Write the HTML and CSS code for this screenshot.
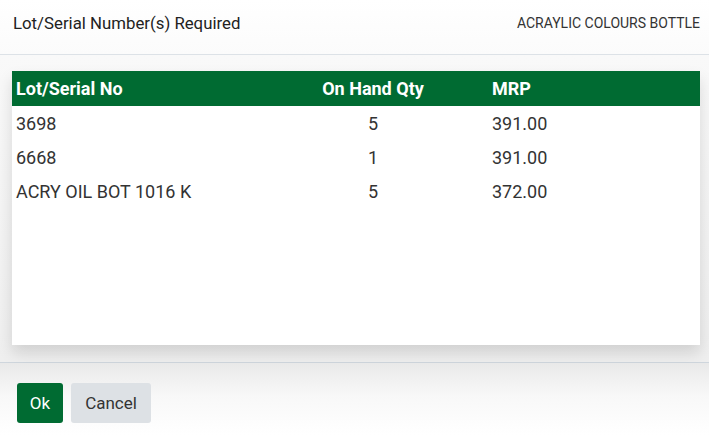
FILE: index.html
```html
<!DOCTYPE html>
<html>
<head>
<meta charset="utf-8">
<link rel="stylesheet" href="styles.css">
</head>
<body>
<div class="modal">
  <div class="modal-header">
    <div class="title">Lot/Serial Number(s) Required</div>
    <div class="subtitle">ACRAYLIC COLOURS BOTTLE</div>
  </div>
  <div class="modal-body">
    <div class="card">
      <table class="grid">
        <thead>
          <tr>
            <th class="c1">Lot/Serial No</th>
            <th class="c2">On Hand Qty</th>
            <th class="c3">MRP</th>
          </tr>
        </thead>
        <tbody>
          <tr><td class="c1">3698</td><td class="c2">5</td><td class="c3">391.00</td></tr>
          <tr><td class="c1">6668</td><td class="c2">1</td><td class="c3">391.00</td></tr>
          <tr><td class="c1">ACRY OIL BOT 1016 K</td><td class="c2">5</td><td class="c3">372.00</td></tr>
        </tbody>
      </table>
    </div>
  </div>
  <div class="modal-footer">
    <button class="btn btn-ok">Ok</button>
    <button class="btn btn-cancel">Cancel</button>
  </div>
</div>
</body>
</html>
```

FILE: styles.css
```css
html, body {
  margin: 0;
  padding: 0;
  background: #ffffff;
}
body {
  font-family: Roboto, "Liberation Sans", sans-serif;
  color: #333;
  width: 709px;
  height: 435px;
  overflow: hidden;
}
.modal {
  display: flex;
  flex-direction: column;
  height: 435px;
}
.modal-header {
  flex-shrink: 0;
  height: 55px;
  box-sizing: border-box;
  display: flex;
  align-items: center;
  justify-content: space-between;
  padding: 0 9px 8px 13px;
  border-bottom: 1px solid #dde2e7;
  background: linear-gradient(#ffffff, #fbfbfb);
}
.title {
  font-size: 16.8px;
  color: #222;
}
.subtitle {
  font-size: 14px;
  color: #333;
}
.modal-body {
  flex-shrink: 0;
  padding: 16px 9px 17px 12px;
  background: linear-gradient(#f9f9f9, #efefef);
  border-bottom: 1px solid #cfd6dd;
}
.card {
  background: #fff;
  height: 274px;
  box-shadow: 0 8px 14px rgba(0, 0, 0, 0.13);
}
.grid {
  width: 100%;
  border-collapse: collapse;
  font-size: 18px;
}
.grid th {
  background: #006b32;
  color: #fff;
  font-weight: 700;
  height: 35px;
  padding: 0 4px;
  text-align: left;
}
.grid td {
  height: 34px;
  padding: 0 4px;
  color: #333;
}
.grid .c1 { width: 238px; }
.grid .c2 { width: 222px; text-align: center; }
.grid .c3 { text-align: left; }
.modal-footer {
  flex: 1;
  display: flex;
  gap: 8px;
  padding: 20px 17px 0;
  align-items: flex-start;
  background: linear-gradient(#e9e9e9, #f8f8f8 45%, #ffffff);
}
.btn {
  height: 40px;
  border: none;
  border-radius: 3px;
  font-family: Roboto, "Liberation Sans", sans-serif;
  font-size: 17px;
  cursor: pointer;
  padding: 0;
}
.btn-ok {
  background: #006b32;
  color: #fff;
  width: 46px;
}
.btn-cancel {
  background: #dde1e5;
  color: #333;
  width: 80px;
}
```
